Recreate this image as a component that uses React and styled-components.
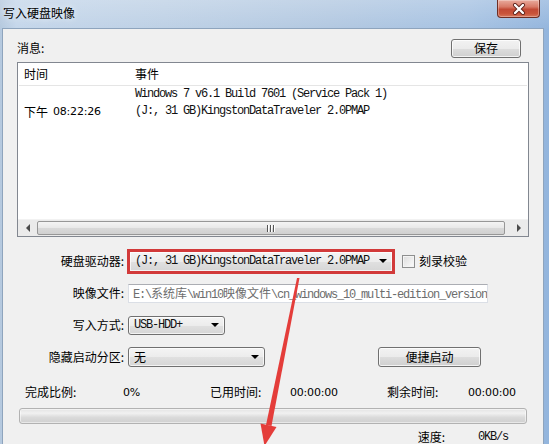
import styled, { createGlobalStyle } from 'styled-components';

const GlobalStyle = createGlobalStyle`
  html, body { margin: 0; padding: 0; overflow: hidden; background: #9dbbdc; }
  body { font-family: "Noto Sans CJK SC", "Noto Sans", sans-serif; font-size: 12px; color: #000; }
  *, *::before, *::after { box-sizing: border-box; }
`;

const cjk = `"Noto Sans CJK SC", "Noto Sans", sans-serif`;

const Window = styled.div`
  position: relative;
  width: 549px;
  height: 444px;
  overflow: hidden;
  display: flex;
  flex-direction: column;
  padding: 0 5px 0 2px;
  background:
    linear-gradient(180deg, rgba(255,255,255,0.22) 0px, rgba(255,255,255,0) 30px),
    linear-gradient(90deg, #b4c8de 0%, #c4d6ea 3%, #bdd0e5 30%, #b2c8e1 60%, #a6c2e2 85%, #93b5dd 100%);
`;

const TitleBar = styled.div`
  height: 28px;
  flex: none;
  display: flex;
  justify-content: space-between;
  align-items: flex-start;
`;

const TitleText = styled.div`
  padding: 5px 0 0 1px;
  font: 12px/15px ${cjk};
  color: #000;
  text-shadow: 0 0 6px rgba(255,255,255,0.9);
`;

const CloseButton = styled.div`
  width: 43px;
  height: 18px;
  margin-right: 4px;
  display: flex;
  align-items: center;
  justify-content: center;
  border: 1px solid #6e2e24;
  border-top: none;
  border-radius: 0 0 4px 4px;
  background: linear-gradient(180deg, #e9ab9d 0%, #d87a67 40%, #c24a35 55%, #c9543a 80%, #d6775c 100%);
  box-shadow: inset 0 0 0 1px rgba(255,255,255,0.3);
`;

const Body = styled.div`
  flex: 1;
  display: flex;
  flex-direction: column;
  background: #f0f0f0;
  border: 1px solid #8ea4bd;
  border-bottom: none;
  padding: 9px 14px 0 14px;
`;

const MsgRow = styled.div`
  height: 20px;
  display: flex;
  align-items: center;
  justify-content: space-between;
`;

const Text = styled.span`
  font: 12px/16px ${cjk};
  color: #000;
  white-space: nowrap;
`;

const Mono = styled.span`
  font-family: "Liberation Mono", ${cjk};
  font-size: 12px;
  letter-spacing: -1.2px;
  white-space: nowrap;
  color: ${p => p.$color || '#111'};
`;

const Cjk = styled.span`
  font-family: ${cjk};
  letter-spacing: 0;
`;

const Num = styled.span`
  font-family: "DejaVu Sans", sans-serif;
  font-size: 11px;
  letter-spacing: -0.2px;
  white-space: nowrap;
`;

const Button = styled.div`
  width: ${p => p.$w}px;
  height: ${p => p.$h || 20}px;
  margin-right: ${p => p.$mr || 0}px;
  margin-left: ${p => p.$ml || 0}px;
  display: flex;
  align-items: center;
  justify-content: center;
  border: 1px solid #707070;
  border-radius: 3px;
  background: linear-gradient(180deg, #f2f2f2 0%, #ebebeb 50%, #dddddd 51%, #cfcfcf 100%);
  box-shadow: inset 0 0 0 1px rgba(255,255,255,0.75);
  font: 12px/16px ${cjk};
`;

const ListBox = styled.div`
  margin-top: 4px;
  height: 175px;
  border: 1px solid #828790;
  background: #fff;
  display: flex;
  flex-direction: column;
`;

const ListHeader = styled.div`
  height: 23px;
  margin: 0 1px;
  display: grid;
  grid-template-columns: 111px 1fr;
  align-items: center;
  padding-left: 5px;
  border-bottom: 1px solid #e5e5e5;
`;

const ListItem = styled.div`
  display: grid;
  grid-template-columns: 111px 1fr;
  padding-left: 6px;
  line-height: 17px;
`;

const TimeCell = styled.div`
  align-self: end;
  display: flex;
  align-items: center;
  gap: 5px;
  height: 17px;
`;

const EventCell = styled.div`
  display: flex;
  flex-direction: column;
`;

const ScrollBar = styled.div`
  margin-top: auto;
  height: 17px;
  display: flex;
  align-items: stretch;
  background: #ebebeb;
  border-top: 1px solid #f2f2f2;
`;

const ScrollArrow = styled.div`
  width: ${p => p.$w}px;
  display: flex;
  align-items: center;
  justify-content: center;
  &::before {
    content: '';
    border-top: 4px solid transparent;
    border-bottom: 4px solid transparent;
    ${p => (p.$dir === 'left'
      ? 'border-right: 4px solid #4a4a4a;'
      : 'border-left: 4px solid #4a4a4a;')}
  }
`;

const Thumb = styled.div`
  flex: 1;
  margin: 1px 4px 1px 0;
  border: 1px solid #979797;
  border-radius: 2px;
  background: linear-gradient(180deg, #f4f4f4 0%, #e8e8e8 50%, #d9d9d9 51%, #d0d0d0 100%);
  display: flex;
  align-items: center;
  justify-content: center;
  gap: 1px;
`;

const Grip = styled.span`
  width: 1px;
  height: 7px;
  background: #555;
  box-shadow: 1px 0 0 #fff;
  margin-right: 1px;
`;

const Form = styled.div`
  margin-top: 8px;
  display: grid;
  grid-template-columns: 110px 1fr;
  grid-auto-rows: 32px;
  align-items: center;
`;

const Label = styled.div`
  text-align: right;
  padding-right: 3px;
  font: 12px/16px ${cjk};
  white-space: nowrap;
`;

const Field = styled.div`
  display: flex;
  align-items: center;
`;

const Highlight = styled.div`
  width: 268px;
  height: 25px;
  border: 3px solid #d23a3a;
  display: flex;
`;

const Combo = styled.div`
  width: ${p => (p.$w ? `${p.$w}px` : 'auto')};
  flex: ${p => (p.$w ? 'none' : '1')};
  height: ${p => p.$h || 19}px;
  margin-left: ${p => p.$ml || 0}px;
  display: flex;
  align-items: center;
  justify-content: space-between;
  padding: 0 5px 0 5px;
  border: ${p => (p.$flat ? 'none' : '1px solid #707070')};
  border-radius: ${p => (p.$flat ? 0 : 3)}px;
  background: linear-gradient(180deg, #f4f4f4 0%, #ececec 50%, #e0e0e0 51%, #d6d6d6 100%);
  box-shadow: inset 0 0 0 1px rgba(255,255,255,0.7);
`;

const DropArrow = styled.span`
  width: 0;
  height: 0;
  border-left: 4px solid transparent;
  border-right: 4px solid transparent;
  border-top: 4px solid #000;
`;

const TextInput = styled.div`
  width: 360px;
  height: 19px;
  margin-left: 1px;
  display: flex;
  align-items: center;
  padding-left: 4px;
  background: #fff;
  border: 1px solid #dbdfe6;
  border-top-color: #abadb3;
  overflow: hidden;
`;

const CheckBox = styled.span`
  width: 13px;
  height: 13px;
  margin: 0 4px 0 7px;
  border: 1px solid #8e8f8f;
  background: linear-gradient(135deg, #dcdcdc 0%, #f6f6f6 80%);
  box-shadow: inset 0 0 0 1px #f4f4f4;
`;

const Stats = styled.div`
  margin-top: 9px;
  height: 20px;
  padding-left: 8px;
  display: grid;
  grid-template-columns: 98px 87px 80px 97px 81px auto;
  align-items: center;
`;

const Progress = styled.div`
  margin: 6px 2px 0 2px;
  height: 16px;
  border: 1px solid #b2b2b2;
  border-radius: 3px;
  background: linear-gradient(180deg, #e3e3e3 0%, #f1f1f1 30%, #dadada 60%, #d0d0d0 100%);
  box-shadow: inset 0 0 0 1px rgba(255,255,255,0.5);
`;

const SpeedRow = styled.div`
  margin-top: 6px;
  height: 14px;
  padding-right: 21px;
  display: flex;
  justify-content: flex-end;
  align-items: center;
  gap: 33px;
  line-height: 14px;
`;

const Overlay = styled.svg`
  position: absolute;
  left: 0;
  top: 0;
  pointer-events: none;
`;

function App() {
  return (
    <>
      <GlobalStyle />
      <Window>
        <TitleBar>
          <TitleText>写入硬盘映像</TitleText>
          <CloseButton>
            <svg width="14" height="12" viewBox="0 0 14 12">
              <path d="M3 2 L11 10 M11 2 L3 10" stroke="#5a1f18" strokeWidth="4" strokeLinecap="round" />
              <path d="M3 2 L11 10 M11 2 L3 10" stroke="#fff" strokeWidth="2.4" strokeLinecap="round" />
            </svg>
          </CloseButton>
        </TitleBar>

        <Body>
          <MsgRow>
            <Text>消息:</Text>
            <Button $w={70} $h={19} $mr={8}>保存</Button>
          </MsgRow>

          <ListBox>
            <ListHeader>
              <Text>时间</Text>
              <Text>事件</Text>
            </ListHeader>
            <ListItem>
              <TimeCell>
                <Text>下午</Text>
                <Num>08:22:26</Num>
              </TimeCell>
              <EventCell>
                <Mono>Windows 7 v6.1 Build 7601 (Service Pack 1)</Mono>
                <Mono>(J:, 31 GB)KingstonDataTraveler 2.0PMAP</Mono>
              </EventCell>
            </ListItem>
            <ScrollBar>
              <ScrollArrow $w={19} $dir="left" />
              <Thumb>
                <Grip />
                <Grip />
                <Grip />
              </Thumb>
              <ScrollArrow $w={19} $dir="right" />
            </ScrollBar>
          </ListBox>

          <Form>
            <Label>硬盘驱动器:</Label>
            <Field>
              <Highlight>
                <Combo $flat $h={19}>
                  <Mono>(J:, 31 GB)KingstonDataTraveler 2.0PMAP</Mono>
                  <DropArrow />
                </Combo>
              </Highlight>
              <CheckBox />
              <Text>刻录校验</Text>
            </Field>

            <Label>映像文件:</Label>
            <Field>
              <TextInput>
                <Mono $color="#6d6d6d">
                  E:\<Cjk>系统库</Cjk>\win10<Cjk>映像文件</Cjk>\cn_windows_10_multi-edition_version
                </Mono>
              </TextInput>
            </Field>

            <Label>写入方式:</Label>
            <Field>
              <Combo $w={97} $ml={1}>
                <Mono>USB-HDD+</Mono>
                <DropArrow />
              </Combo>
            </Field>

            <Label>隐藏启动分区:</Label>
            <Field>
              <Combo $w={137} $h={20} $ml={1}>
                <Text>无</Text>
                <DropArrow />
              </Combo>
              <Button $w={103} $ml={113}>便捷启动</Button>
            </Field>
          </Form>

          <Stats>
            <Text>完成比例:</Text>
            <Num>0%</Num>
            <Text>已用时间:</Text>
            <Num>00:00:00</Num>
            <Text>剩余时间:</Text>
            <Num>00:00:00</Num>
          </Stats>

          <Progress />

          <SpeedRow>
            <Text>速度:</Text>
            <Mono>0KB/s</Mono>
          </SpeedRow>
        </Body>

        <Overlay width="549" height="444" viewBox="0 0 549 444">
          <polygon points="297,278 299.5,278 271.5,426 266,425" fill="#e43d3a" />
          <polygon points="264.5,446 260.5,423.5 276.5,427" fill="#e43d3a" />
        </Overlay>
      </Window>
    </>
  );
}

export default App;
